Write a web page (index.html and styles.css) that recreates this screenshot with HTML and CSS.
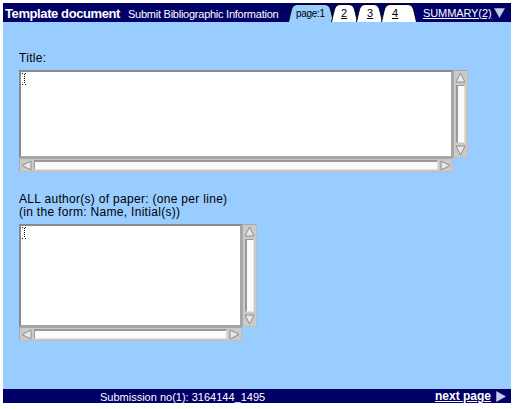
FILE: index.html
```html
<!DOCTYPE html>
<html>
<head>
<meta charset="utf-8">
<title>Template document</title>
<link rel="stylesheet" href="styles.css">
</head>
<body>
<div class="page">
  <header class="topbar">
    <div class="titles">
      <span class="doc-title">Template document</span>
      <span class="doc-sub">Submit Bibliographic Information</span>
    </div>
    <nav class="tabs">
      <span class="tab tab-w46 tab-active">
        <svg class="tab-shape" width="46" height="18" viewBox="0 0 46 18"><path d="M0.5 18 C2 12 3 6 4.5 3 Q6 0.5 9 0.5 H37 Q40 0.5 41.5 3 C43 6 44 12 45.5 18"/></svg>
        <span class="tab-label">page:1</span>
      </span>
      <a class="tab tab-w27 tab-link" href="#">
        <svg class="tab-shape" width="27" height="18" viewBox="0 0 27 18"><path d="M0.5 18 C2 12 3 6 4.5 3 Q6 0.5 9 0.5 H18 Q21 0.5 22.5 3 C24 6 25 12 26.5 18"/></svg>
        <span class="tab-num">2</span>
      </a>
      <a class="tab tab-w27 tab-link" href="#">
        <svg class="tab-shape" width="27" height="18" viewBox="0 0 27 18"><path d="M0.5 18 C2 12 3 6 4.5 3 Q6 0.5 9 0.5 H18 Q21 0.5 22.5 3 C24 6 25 12 26.5 18"/></svg>
        <span class="tab-num">3</span>
      </a>
      <a class="tab tab-w36 tab-link" href="#">
        <svg class="tab-shape" width="36" height="18" viewBox="0 0 36 18"><path d="M0.5 18 C2 12 3 6 4.5 3 Q6 0.5 9 0.5 H27 Q30 0.5 31.5 3 C33 6 34 12 35.5 18"/></svg>
        <span class="tab-num">4</span>
      </a>
    </nav>
    <a class="summary" href="#">SUMMARY(2)</a>
    <svg class="tri tri-down" width="11" height="10" viewBox="0 0 11 10"><polygon points="0.5,0.5 10.5,0.5 5.5,9.5"/></svg>
  </header>

  <main class="content">
    <div class="label">Title:</div>
    <div class="field field-title">
      <textarea class="ta"></textarea>
      <div class="vscroll">
        <svg class="arr" width="11" height="11" viewBox="0 0 11 11"><polygon points="5.5,1 10,10 1,10"/></svg>
        <div class="vthumb"></div>
        <svg class="arr" width="11" height="11" viewBox="0 0 11 11"><polygon points="1,1 10,1 5.5,10"/></svg>
      </div>
      <div class="hscroll">
        <svg class="arr" width="11" height="11" viewBox="0 0 11 11"><polygon points="1,5.5 10,1 10,10"/></svg>
        <div class="hthumb"></div>
        <svg class="arr" width="11" height="11" viewBox="0 0 11 11"><polygon points="1,1 10,5.5 1,10"/></svg>
      </div>
      <svg class="ibeam" width="5" height="12" viewBox="0 0 5 12"><path d="M0 0.5H2M3 0.5H5M0 11.5H2M3 11.5H5M2.5 1V11" stroke-dasharray="1 1"/></svg>
    </div>

    <div class="label label-authors">ALL author(s) of paper: (one per line)<br>(in the form: Name, Initial(s))</div>
    <div class="field field-authors">
      <textarea class="ta"></textarea>
      <div class="vscroll">
        <svg class="arr" width="11" height="11" viewBox="0 0 11 11"><polygon points="5.5,1 10,10 1,10"/></svg>
        <div class="vthumb"></div>
        <svg class="arr" width="11" height="11" viewBox="0 0 11 11"><polygon points="1,1 10,1 5.5,10"/></svg>
      </div>
      <div class="hscroll">
        <svg class="arr" width="11" height="11" viewBox="0 0 11 11"><polygon points="1,5.5 10,1 10,10"/></svg>
        <div class="hthumb"></div>
        <svg class="arr" width="11" height="11" viewBox="0 0 11 11"><polygon points="1,1 10,5.5 1,10"/></svg>
      </div>
      <svg class="ibeam" width="5" height="12" viewBox="0 0 5 12"><path d="M0 0.5H2M3 0.5H5M0 11.5H2M3 11.5H5M2.5 1V11" stroke-dasharray="1 1"/></svg>
    </div>
  </main>

  <footer class="bottombar">
    <span class="subno">Submission no(1): 3164144_1495</span>
    <a class="next" href="#">next page</a>
    <svg class="tri tri-right" width="10" height="11" viewBox="0 0 10 11"><polygon points="0.5,0.5 9.5,5.5 0.5,10.5"/></svg>
  </footer>
</div>
</body>
</html>
```

FILE: styles.css
```css
html, body {
  margin: 0;
  background: #ffffff;
}

body {
  padding: 3px 0 0 3px;
  font-family: "Liberation Sans", Arial, Helvetica, sans-serif;
}

.page {
  width: 508px;
  height: 400px;
  display: flex;
  flex-direction: column;
  background: #99ccff;
}

/* ---------- top bar ---------- */
.topbar {
  flex: none;
  height: 19px;
  background: #000066;
  color: #ffffff;
  display: flex;
  align-items: flex-end;
}

.titles {
  flex: none;
  width: 285px;
  height: 19px;
  box-sizing: border-box;
  padding: 3px 0 0 2px;
  display: flex;
  align-items: baseline;
  line-height: 16px;
  white-space: nowrap;
}

.doc-title {
  font-size: 13px;
  font-weight: bold;
  letter-spacing: -0.4px;
}

.doc-sub {
  margin-left: 8px;
  font-size: 11px;
  letter-spacing: -0.25px;
}

.tabs {
  display: flex;
  height: 18px;
}

.tab {
  position: relative;
  flex: none;
  display: block;
  height: 18px;
  color: #000000;
}

.tab-w46 { width: 46px; }
.tab-w27 { width: 27px; margin-left: -3px; }
.tab-w27 + .tab-w27 { margin-left: -2px; }
.tab-w36 { width: 36px; margin-left: -2px; }

.tab-shape {
  position: absolute;
  left: 0;
  top: 0;
  display: block;
}

.tab-shape path {
  fill: #ffffff;
  stroke: #000000;
  stroke-width: 1;
}

.tab-active .tab-shape path {
  fill: #99ccff;
}

.tab-label {
  position: relative;
  display: block;
  padding: 1px 0 0 8px;
  font-size: 10px;
  line-height: 17px;
  letter-spacing: -0.3px;
}

.tab-num {
  position: relative;
  display: block;
  padding: 1px 0 0 10px;
  font-size: 11px;
  line-height: 17px;
  text-decoration: underline;
}

.tab-w27 + .tab-w27 .tab-num,
.tab-w36 .tab-num {
  padding-left: 11px;
}

.summary {
  margin-left: 6px;
  align-self: center;
  margin-top: 1px;
  font-size: 11px;
  letter-spacing: -0.1px;
  color: #ffffff;
  text-decoration: underline;
  line-height: 14px;
}

.tri polygon {
  fill: #c4cde6;
  stroke: #c4cde6;
  stroke-width: 0.5;
}

.tri-down {
  display: block;
  margin: 0 0 4px 3px;
}

/* ---------- content ---------- */
.content {
  flex: 1;
  padding: 30px 0 0 16px;
}

.label {
  font-size: 12px;
  line-height: 13px;
  letter-spacing: 0.3px;
  color: #000000;
}

.label-authors {
  margin-top: 21px;
}

.field {
  position: relative;
  display: grid;
  margin-top: 5px;
}

.field-title {
  grid-template-columns: 434px 15px;
  grid-template-rows: 88px 14px;
}

.field-authors {
  grid-template-columns: 223px 15px;
  grid-template-rows: 103px 14px;
}

.ta {
  display: block;
  box-sizing: border-box;
  width: 100%;
  height: 100%;
  margin: 0;
  padding: 0;
  resize: none;
  overflow: hidden;
  background: #ffffff;
  border: 2px solid;
  border-color: #8a8a8a #a6a6a6 #a6a6a6 #8a8a8a;
  outline: none;
}

.vscroll {
  box-sizing: border-box;
  background: #cacaca;
  border: 1px solid;
  border-color: #a8a8a8 #bdbdbd #bdbdbd #a8a8a8;
  display: flex;
  flex-direction: column;
  align-items: center;
  padding: 1px 0;
}

.hscroll {
  box-sizing: border-box;
  background: #cacaca;
  border: 1px solid;
  border-color: #a8a8a8 #bdbdbd #bdbdbd #a8a8a8;
  display: flex;
  align-items: center;
  padding: 0 1px;
}

.arr {
  display: block;
  flex: none;
}

.arr polygon {
  fill: #e9e9e9;
  stroke: #8c8c8c;
  stroke-width: 1;
}

.vthumb {
  flex: 1;
  align-self: stretch;
  margin: 2px 2px;
  background: #fbfbfb;
  border: 1px solid;
  border-color: #9a9a9a #e2e2e2 #e2e2e2 #9a9a9a;
  border-left-width: 2px;
}

.hthumb {
  flex: 1;
  align-self: stretch;
  margin: 1px 2px;
  background: #fbfbfb;
  border: 1px solid;
  border-color: #9a9a9a #e2e2e2 #e2e2e2 #9a9a9a;
  border-top-width: 2px;
}

.ibeam {
  position: absolute;
  left: 3px;
  top: 3px;
  display: block;
}

.ibeam path {
  stroke: #000000;
  stroke-width: 1;
  fill: none;
}

/* ---------- bottom bar ---------- */
.bottombar {
  flex: none;
  height: 14px;
  background: #000066;
  color: #ffffff;
  display: flex;
  align-items: center;
}

.subno {
  padding-left: 97px;
  font-size: 11px;
  line-height: 14px;
  padding-top: 1px;
}

.next {
  margin-left: auto;
  font-size: 12px;
  font-weight: bold;
  line-height: 14px;
  color: #ffffff;
  text-decoration: underline;
}

.tri-right {
  display: block;
  margin: 0 5px 0 5px;
}
```
